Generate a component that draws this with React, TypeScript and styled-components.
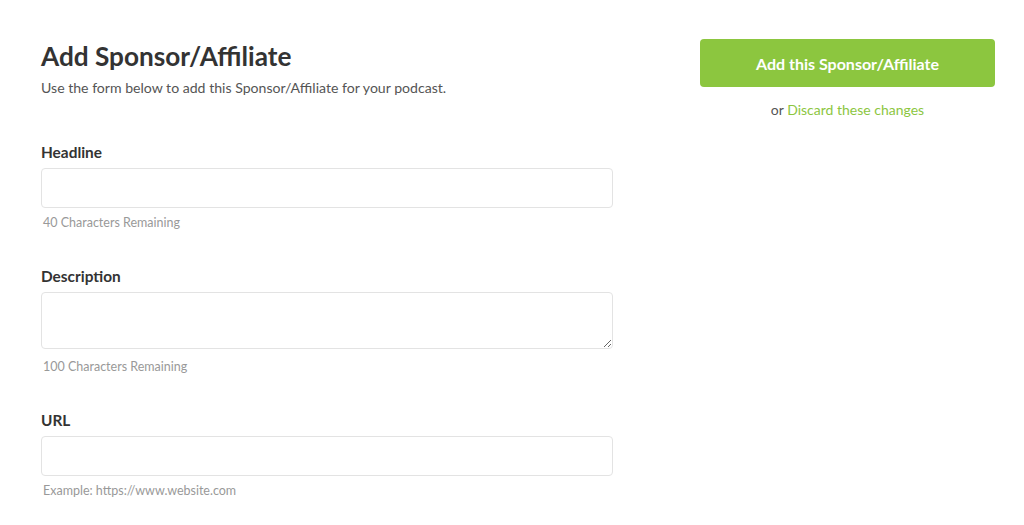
import React from 'react';
import styled, { createGlobalStyle } from 'styled-components';

const GlobalStyle = createGlobalStyle`
  html, body {
    margin: 0;
    padding: 0;
    background: #ffffff;
  }
  body {
    font-family: Lato, "Open Sans", "Liberation Sans", sans-serif;
    color: #333333;
  }
  * {
    box-sizing: border-box;
  }
`;

const Page = styled.div`
  display: grid;
  grid-template-columns: 572px 295px;
  column-gap: 87px;
  align-items: start;
  padding: 40px 0 0 41px;
`;

const FormColumn = styled.div`
  display: flex;
  flex-direction: column;
`;

const Title = styled.h1`
  margin: 0;
  font-size: 26.2px;
  line-height: 32px;
  font-weight: 700;
  color: #333333;
`;

const Intro = styled.p`
  margin: 6px 0 0;
  font-size: 14.1px;
  line-height: 20px;
  color: #555555;
`;

const Fields = styled.div`
  display: flex;
  flex-direction: column;
  gap: 34px;
  margin-top: 44px;
`;

const Field = styled.div`
  display: flex;
  flex-direction: column;
`;

const Label = styled.label`
  font-size: 15.4px;
  line-height: 20px;
  font-weight: 700;
  color: #333333;
  margin-bottom: 6px;
`;

const TextInput = styled.input`
  display: block;
  width: 100%;
  height: 40px;
  border: 1px solid #e3e3e3;
  border-radius: 4px;
  padding: 0 12px;
  font: inherit;
  font-size: 14px;
  color: #333333;
  background: #ffffff;
  outline: none;
`;

const TextArea = styled.textarea`
  display: block;
  width: 100%;
  height: 57px;
  margin-bottom: 3px;
  border: 1px solid #e3e3e3;
  border-radius: 4px;
  padding: 8px 12px;
  font: inherit;
  font-size: 14px;
  color: #333333;
  background: #ffffff;
  outline: none;
  resize: vertical;
`;

const Hint = styled.span`
  margin-top: 6px;
  padding-left: 2px;
  font-size: 12.5px;
  line-height: 18px;
  color: #999999;
`;

const ActionColumn = styled.div`
  display: flex;
  flex-direction: column;
  align-items: stretch;
  margin-top: -1px;
`;

const PrimaryButton = styled.button`
  height: 48px;
  border: none;
  border-radius: 4px;
  background: #8cc63f;
  color: #ffffff;
  font-family: inherit;
  font-size: 16px;
  font-weight: 700;
  cursor: pointer;
`;

const DiscardLine = styled.p`
  margin: 13px 0 0;
  text-align: center;
  font-size: 14px;
  line-height: 20px;
  color: #555555;
`;

const DiscardLink = styled.a`
  color: #8cc63f;
  text-decoration: none;
`;

const fields = [
  { id: 'headline', label: 'Headline', hint: '40 Characters Remaining', multiline: false },
  { id: 'description', label: 'Description', hint: '100 Characters Remaining', multiline: true },
  { id: 'url', label: 'URL', hint: 'Example: https://www.website.com', multiline: false },
];

const App: React.FC = () => {
  return (
    <>
      <GlobalStyle />
      <Page>
        <FormColumn>
          <Title>Add Sponsor/Affiliate</Title>
          <Intro>Use the form below to add this Sponsor/Affiliate for your podcast.</Intro>

          <Fields>
            {fields.map((field) => (
              <Field key={field.id}>
                <Label htmlFor={field.id}>{field.label}</Label>
                {field.multiline ? (
                  <TextArea id={field.id} />
                ) : (
                  <TextInput id={field.id} type="text" />
                )}
                <Hint>{field.hint}</Hint>
              </Field>
            ))}
          </Fields>
        </FormColumn>

        <ActionColumn>
          <PrimaryButton type="button">Add this Sponsor/Affiliate</PrimaryButton>
          <DiscardLine>
            or <DiscardLink href="#">Discard these changes</DiscardLink>
          </DiscardLine>
        </ActionColumn>
      </Page>
    </>
  );
};

export default App;
